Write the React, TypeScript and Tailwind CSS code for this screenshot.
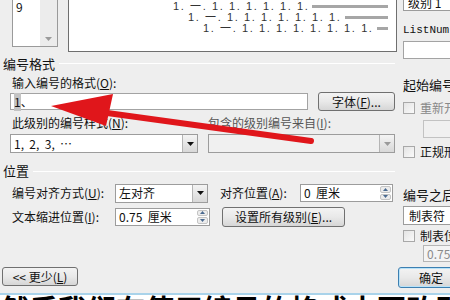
import { FC, ReactNode } from "react";

const cjk = "font-['SimSun','Noto_Sans_CJK_SC',sans-serif]";

type BoxProps = { className?: string; children?: ReactNode };

const DropArrow: FC<{ disabled?: boolean }> = ({ disabled }) => (
  <div className="flex h-full w-[15px] items-center justify-center border-l border-[#b5b5b5] bg-gradient-to-b from-[#f4f4f4] to-[#d8d8d8]">
    <svg width="7" height="4" viewBox="0 0 7 4">
      <path d="M0 0h7L3.5 4z" fill={disabled ? "#9a9a9a" : "#111"} />
    </svg>
  </div>
);

const Combo: FC<BoxProps & { disabled?: boolean }> = ({ className, children, disabled }) => (
  <div
    className={`flex items-stretch border border-[#9c9c9c] ${disabled ? "bg-[#f0f0f0]" : "bg-white"} ${className ?? ""}`}
  >
    <div className="flex flex-1 items-center overflow-hidden whitespace-pre pl-[3px] text-[12px] text-[#111]">
      {children}
    </div>
    <DropArrow disabled={disabled} />
  </div>
);

const Spin: FC<BoxProps> = ({ className, children }) => (
  <div className={`flex items-stretch border border-[#9c9c9c] bg-white ${className ?? ""}`}>
    <div className="flex flex-1 items-center whitespace-pre pl-[3px] text-[12px] text-[#111]">{children}</div>
    <div className="my-[1px] mr-[1px] flex w-[11px] flex-col gap-px">
      <div className="flex flex-1 items-center justify-center rounded-[2px] border border-[#c4c4c4] bg-[#ececec]">
        <svg width="5" height="3" viewBox="0 0 5 3">
          <path d="M0 3h5L2.5 0z" fill="#4a6a90" />
        </svg>
      </div>
      <div className="flex flex-1 items-center justify-center rounded-[2px] border border-[#c4c4c4] bg-[#ececec]">
        <svg width="5" height="3" viewBox="0 0 5 3">
          <path d="M0 0h5L2.5 3z" fill="#4a6a90" />
        </svg>
      </div>
    </div>
  </div>
);

const Btn: FC<BoxProps & { primary?: boolean }> = ({ className, children, primary }) => (
  <div
    className={`flex items-center justify-center rounded-[3px] border ${primary ? "border-[#3c7fb1] shadow-[inset_0_0_0_1px_#b8e2f8]" : "border-[#707070]"} bg-gradient-to-b from-[#f3f3f3] via-[#e9e9e9] to-[#d6d6d6] text-[12px] text-[#111] ${className ?? ""}`}
  >
    {children}
  </div>
);

const Check: FC<BoxProps> = ({ className, children }) => (
  <div className={`flex items-center gap-[5px] text-[12px] ${className ?? ""}`}>
    <div className="h-[12px] w-[12px] shrink-0 border border-[#a8a8a8] bg-gradient-to-br from-[#e4e4e4] to-[#fafafa]" />
    <span className="whitespace-nowrap">{children}</span>
  </div>
);

const GroupTitle: FC<{ title: string; className?: string }> = ({ title, className }) => (
  <div className={`flex items-center ${className ?? ""}`}>
    <span className="pl-[3px] pr-[4px] text-[13px] leading-[14px] text-[#111]">{title}</span>
    <div className="mr-[2px] h-px flex-1 border-b border-white bg-[#d5d5d5]" />
  </div>
);

const previewRows = [8, 9, 10];

const PreviewRow: FC<{ count: number; indent: number }> = ({ count, indent }) => {
  const parts = Array.from({ length: count }, (_, i) => (i === 1 ? "一." : "1."));
  return (
    <div className="flex h-[11px] items-center pr-[8px]" style={{ paddingLeft: indent }}>
      <span className="whitespace-nowrap font-['Liberation_Sans','Noto_Sans_CJK_SC',sans-serif] text-[11px] leading-[11px] tracking-[1.6px] text-[#333]">
        {parts.join(" ")}
      </span>
      <div className="ml-[3px] h-[3px] flex-1 bg-[#a6a6a6]" />
    </div>
  );
};

export default function App() {
  return (
    <div className={`relative h-[300px] w-[450px] overflow-hidden bg-[#eeeeee] ${cjk} text-[#111]`}>
      <div className="flex h-[267px]">
        {/* left column */}
        <div className="flex w-[398px] flex-col">
          <div className="flex h-[53px] items-start">
            <div className="ml-[12px] flex h-[47px] w-[46px] border-x border-b border-[#9a9a9a] bg-white">
              <div className="flex-1 pl-[3px] pt-[1px] text-[12px] leading-[12px]">9</div>
              <div className="flex w-[17px] flex-col justify-end bg-[#ececec] pb-[5px]">
                <svg className="mx-auto" width="7" height="4" viewBox="0 0 7 4">
                  <path d="M0 0h7L3.5 4z" fill="#9a9a9a" />
                </svg>
              </div>
            </div>
            <div className="ml-[10px] flex h-[52px] w-[329px] flex-col border-x border-b border-[#6f6f6f] bg-white pt-[1px]">
              {previewRows.map((c, i) => (
                <PreviewRow key={c} count={c} indent={104 + i * 15} />
              ))}
            </div>
          </div>

          <GroupTitle title="编号格式" className="h-[21px]" />
          <div className="flex h-[18px] items-center pl-[12px] text-[12px]">输入编号的格式(<u>O</u>):</div>

          <div className="flex h-[20px] items-start">
            <div className="ml-[10px] mt-px flex h-[17px] w-[298px] items-center border border-[#a3a3a3] bg-white pl-[3px] text-[12px]">
              <span className="bg-[#c3c3c3]">1</span>
              <span>、</span>
            </div>
            <Btn className="ml-[10px] h-[19px] w-[77px]">字体(<u>F</u>)...</Btn>
          </div>

          <div className="flex h-[21px] items-center text-[12px]">
            <span className="ml-[12px] w-[196px]">此级别的编号样式(<u>N</u>):</span>
            <span className="text-[#555]">包含的级别编号来自(<u>I</u>):</span>
          </div>

          <div className="flex h-[21px] items-center">
            <Combo className="ml-[10px] h-[19px] w-[188px]">1,  2,  3,  …</Combo>
            <Combo disabled className="ml-[10px] h-[19px] w-[187px]" />
          </div>

          <GroupTitle title="位置" className="h-[28px] pt-[6px]" />

          <div className="flex h-[22px] items-center text-[12px]">
            <span className="ml-[12px] w-[103px]">编号对齐方式(<u>U</u>):</span>
            <Combo className="h-[19px] w-[93px]">左对齐</Combo>
            <span className="ml-[12px] w-[80px]">对齐位置(<u>A</u>):</span>
            <Spin className="h-[18px] w-[93px]">0  厘米</Spin>
          </div>

          <div className="mt-[2px] flex h-[21px] items-center text-[12px]">
            <span className="ml-[12px] w-[103px]">文本缩进位置(<u>I</u>):</span>
            <Spin className="h-[18px] w-[95px]">0.75  厘米</Spin>
            <Btn className="ml-[12px] h-[20px] w-[123px]">设置所有级别(<u>E</u>)...</Btn>
          </div>
        </div>

        {/* right column */}
        <div className="flex flex-1 flex-col pl-[6px]">
          <div className="-mt-[8px] flex h-[19px] items-end border border-[#9c9c9c] bg-white pb-[1px] pl-[4px] text-[12px] leading-[12px]">
            级别 1
          </div>
          <div className="mt-[12px] h-[14px] font-['Liberation_Mono',monospace] text-[11px] leading-[14px]">
            ListNum
          </div>
          <div className="mt-[4px] h-[18px] border border-[#a3a3a3] bg-white" />
          <div className="mt-[19px] h-[14px] text-[13px] leading-[14px]">起始编号</div>
          <Check className="mt-[9px] h-[14px] text-[#888]">重新开始</Check>
          <div className="ml-[20px] mt-[5px] h-[18px] border border-[#c2c2c2] bg-[#f0f0f0]" />
          <Check className="mt-[7px] h-[13px]">正规形式</Check>
          <div className="mt-[30px] h-[14px] text-[13px] leading-[14px]">编号之后</div>
          <div className="mt-[4px] flex h-[19px] items-center border border-[#9c9c9c] bg-white pl-[5px] text-[12px]">
            制表符
          </div>
          <Check className="mt-[4px] h-[13px]">制表位</Check>
          <div className="ml-[20px] mt-[3px] flex h-[17px] items-center border border-[#b5b5b5] bg-[#f4f4f4] pl-[3px] text-[12px] text-[#8a8a8a]">
            0.75
          </div>
        </div>
      </div>

      <div className="flex h-[21px] items-start justify-between">
        <Btn className="ml-[2px] h-[19px] w-[76px]">&lt;&lt; 更少(<u>L</u>)</Btn>
        <Btn primary className="mr-[-8px] h-[21px] w-[60px] justify-start pl-[20px]">确定</Btn>
      </div>

      <div className="mt-[5px] h-[2px] bg-[#a9d3ea]" />
      <div className="h-[20px] overflow-hidden bg-white">
        <div className="-mt-[4px] whitespace-nowrap font-['Noto_Sans_CJK_SC',sans-serif] text-[29px] font-bold leading-[34px] text-black">
          然后我们在使用编号的格式中更改即可
        </div>
      </div>

      {/* red annotation arrow */}
      <svg className="pointer-events-none absolute left-0 top-0" width="450" height="300" viewBox="0 0 450 300">
        <line x1="100" y1="112" x2="311" y2="141" stroke="#e0161b" strokeWidth="6" strokeLinecap="round" />
        <path d="M51 106 L113 94 L106 126 Z" fill="#e0161b" />
      </svg>
    </div>
  );
}
